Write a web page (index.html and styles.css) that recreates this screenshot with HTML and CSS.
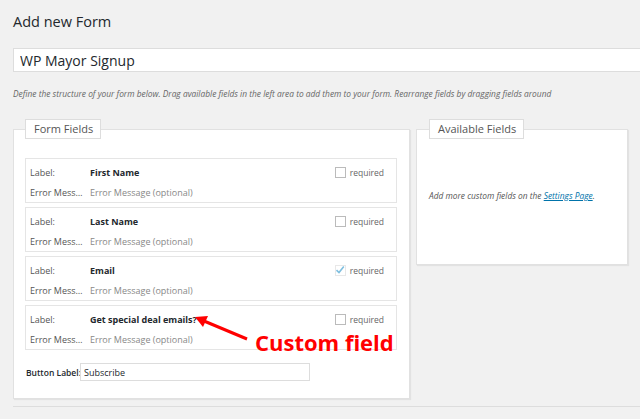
FILE: index.html
```html
<!DOCTYPE html>
<html lang="en">
<head>
    <meta charset="UTF-8">
    <title>Add new Form</title>
    <link rel="stylesheet" href="styles.css">
</head>
<body>
    <div class="wrap">
        <h1>Add new Form</h1>
        <input class="title-input" type="text" value="WP Mayor Signup">
        <p class="description">Define the structure of your form below. Drag available fields in the left area to add them to your form. Rearrange fields by dragging fields around</p>

        <div class="columns">
            <fieldset class="panel form-fields">
                <legend>Form Fields</legend>

                <div class="field-row">
                    <div class="line">
                        <span class="key">Label:</span>
                        <span class="value">First Name</span>
                        <label class="required"><span class="checkbox"></span>required</label>
                    </div>
                    <div class="line">
                        <span class="key">Error Message</span>
                        <span class="placeholder">Error Message (optional)</span>
                    </div>
                </div>

                <div class="field-row">
                    <div class="line">
                        <span class="key">Label:</span>
                        <span class="value">Last Name</span>
                        <label class="required"><span class="checkbox"></span>required</label>
                    </div>
                    <div class="line">
                        <span class="key">Error Message</span>
                        <span class="placeholder">Error Message (optional)</span>
                    </div>
                </div>

                <div class="field-row">
                    <div class="line">
                        <span class="key">Label:</span>
                        <span class="value">Email</span>
                        <label class="required"><span class="checkbox checked"><svg viewBox="0 0 12 12" width="12" height="12"><path d="M2.5 6.2 L5 8.6 L9.8 2.6" fill="none" stroke="#7fbfdf" stroke-width="1.6"/></svg></span>required</label>
                    </div>
                    <div class="line">
                        <span class="key">Error Message</span>
                        <span class="placeholder">Error Message (optional)</span>
                    </div>
                </div>

                <div class="field-row">
                    <div class="line">
                        <span class="key">Label:</span>
                        <span class="value">Get special deal emails?</span>
                        <label class="required"><span class="checkbox"></span>required</label>
                    </div>
                    <div class="line">
                        <span class="key">Error Message</span>
                        <span class="placeholder">Error Message (optional)</span>
                    </div>
                </div>

                <div class="button-row">
                    <span class="button-key">Button Label:</span>
                    <input class="button-input" type="text" value="Subscribe">
                </div>
            </fieldset>

            <fieldset class="panel available">
                <legend>Available Fields</legend>
                <p class="hint">Add more custom fields on the <a href="#">Settings Page</a>.</p>
            </fieldset>
        </div>

        <div class="divider"></div>
    </div>

    <!-- annotation drawn over the screenshot -->
    <svg class="arrow" width="60" height="30" viewBox="0 0 60 30">
        <line x1="55" y1="26" x2="12" y2="8" stroke="#f00" stroke-width="3"/>
        <polygon points="3,4 16,3 11,14" fill="#f00"/>
    </svg>
    <div class="callout">Custom field</div>
</body>
</html>
```

FILE: styles.css
```css
body {
    margin: 0;
    background-color: #f1f1f1;
    font-family: "Open Sans", "DejaVu Sans", sans-serif;
    color: #23282d;
    overflow: hidden;
    position: relative;
    height: 419px;
}

.wrap {
    padding-left: 13px;
}

h1 {
    margin: 12px 0 0;
    font-size: 14.5px;
    line-height: 20px;
    font-weight: 400;
}

.title-input {
    display: block;
    box-sizing: border-box;
    width: calc(100% + 4px);
    height: 24px;
    margin: 16px 0 0;
    padding: 0 6px;
    border: 1px solid #ddd;
    background: #fff;
    font-family: inherit;
    font-size: 14px;
    color: #23282d;
    outline: none;
}

.description {
    margin: 16px 0 0;
    font-size: 8.4px;
    line-height: 12px;
    font-style: italic;
    color: #666;
    white-space: nowrap;
}

.columns {
    display: flex;
    align-items: flex-start;
    gap: 6px;
    margin-top: 19px;
}

.panel {
    box-sizing: border-box;
    margin: 0;
    border: 1px solid #e1e1e1;
    background: #fff;
    box-shadow: 1px 1px 1px rgba(0, 0, 0, 0.06);
    min-width: 0;
}

.panel legend {
    margin: 0;
    padding: 0 7px 0 8px;
    border: 1px solid #ddd;
    background: #fff;
    font-size: 11px;
    line-height: 18px;
    color: #555;
}

.form-fields {
    width: 397px;
    padding: 19px 12px 17px 11px;
}

.available {
    width: 212px;
    height: 146px;
    padding: 51px 12px 0 12px;
}

.field-row {
    box-sizing: border-box;
    height: 45px;
    margin-bottom: 4px;
    padding: 3px 12px 0 4px;
    border: 1px solid #e5e5e5;
    background: #fff;
}

.line {
    display: flex;
    align-items: center;
    height: 20px;
    font-size: 9px;
}

.key {
    width: 53px;
    margin-right: 7px;
    color: #555;
    white-space: nowrap;
    overflow: hidden;
    text-overflow: ellipsis;
}

.value {
    font-weight: 700;
    color: #23282d;
}

.placeholder {
    color: #888;
}

.required {
    display: flex;
    align-items: center;
    margin-left: auto;
    color: #666;
    font-size: 8.5px;
}

.checkbox {
    box-sizing: border-box;
    width: 11px;
    height: 11px;
    margin-right: 4px;
    border: 1px solid #bbb;
    display: flex;
    align-items: center;
    justify-content: center;
}

.checkbox.checked {
    border-color: #e8e8e8;
}

.checkbox svg {
    flex: none;
}

.button-row {
    display: flex;
    align-items: center;
    margin-top: 13px;
    padding-left: 1px;
    font-size: 9px;
}

.button-key {
    width: 54px;
    color: #23282d;
    font-weight: 600;
    font-size: 8.5px;
    white-space: nowrap;
}

.button-input {
    box-sizing: border-box;
    width: 230px;
    height: 18px;
    margin: 0;
    padding: 0 3px;
    border: 1px solid #ddd;
    background: #fff;
    font-family: inherit;
    font-size: 9px;
    color: #23282d;
    outline: none;
}

.hint {
    margin: 0;
    font-size: 8.4px;
    line-height: 12px;
    font-style: italic;
    color: #555;
    white-space: nowrap;
}

.hint a {
    color: #0073aa;
}

.divider {
    height: 1px;
    margin-top: 7px;
    background: #ddd;
}

.arrow {
    position: absolute;
    left: 192px;
    top: 313px;
}

.callout {
    position: absolute;
    left: 255px;
    top: 327px;
    font-size: 22px;
    line-height: 30px;
    font-weight: 700;
    color: #f00;
}
```
